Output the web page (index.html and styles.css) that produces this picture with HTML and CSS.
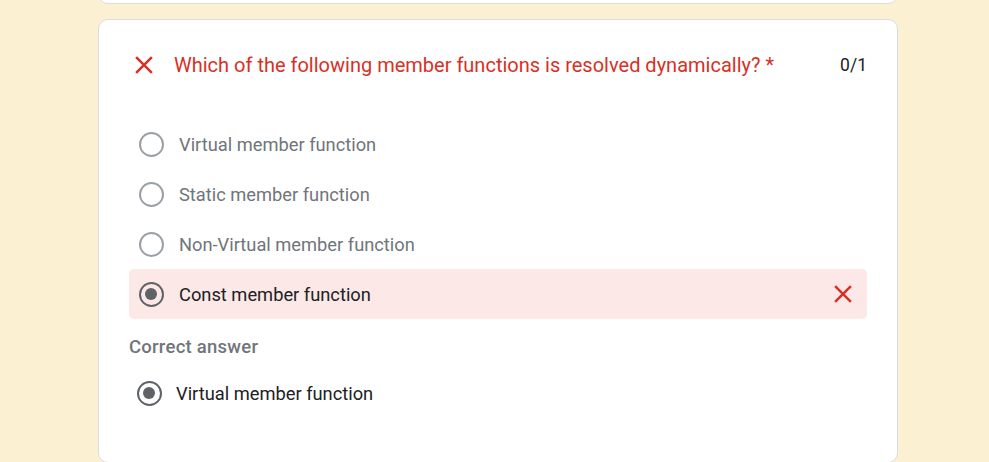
FILE: index.html
```html
<!DOCTYPE html>
<html>
<head>
<meta charset="utf-8">
<link rel="stylesheet" href="styles.css">
</head>
<body>
<div class="page">
  <div class="card card-prev"></div>
  <div class="card card-main">
    <div class="q-head">
      <span class="icon icon-wrong">
        <svg viewBox="0 0 24 24" width="30" height="30"><path d="M19 6.41L17.59 5 12 10.59 6.41 5 5 6.41 10.59 12 5 17.59 6.41 19 12 13.41 17.59 19 19 17.59 13.41 12z" fill="#d93025"/></svg>
      </span>
      <div class="q-title">Which of the following member functions is resolved dynamically? *</div>
      <div class="q-score">0/1</div>
    </div>
    <div class="options">
      <div class="opt">
        <span class="radio"></span>
        <span class="opt-text">Virtual member function</span>
      </div>
      <div class="opt">
        <span class="radio"></span>
        <span class="opt-text">Static member function</span>
      </div>
      <div class="opt">
        <span class="radio"></span>
        <span class="opt-text">Non-Virtual member function</span>
      </div>
      <div class="opt opt-wrong">
        <span class="radio radio-on"></span>
        <span class="opt-text opt-text-sel">Const member function</span>
        <span class="icon icon-row">
          <svg viewBox="0 0 24 24" width="30" height="30"><path d="M19 6.41L17.59 5 12 10.59 6.41 5 5 6.41 10.59 12 5 17.59 6.41 19 12 13.41 17.59 19 19 17.59 13.41 12z" fill="#d93025"/></svg>
        </span>
      </div>
    </div>
    <div class="correct-label">Correct answer</div>
    <div class="opt opt-correct">
      <span class="radio radio-on"></span>
      <span class="opt-text opt-text-sel">Virtual member function</span>
    </div>
  </div>
</div>
</body>
</html>
```
FILE: styles.css
```css
html, body {
  margin: 0;
  padding: 0;
  background: #fbf0d2;
  font-family: Roboto, "Liberation Sans", Arial, sans-serif;
  overflow: hidden;
}
.page {
  width: 800px;
  margin-left: 98px;
  display: flex;
  flex-direction: column;
  gap: 15px;
}
.card {
  background: #fff;
  border: 1px solid #dadce0;
  border-radius: 10px;
  box-sizing: border-box;
}
.card-prev {
  height: 20px;
  margin-top: -16px;
}
.card-main {
  padding: 30px 30px 24px 30px;
  height: 444px;
}
.q-head {
  display: flex;
  align-items: center;
  height: 30px;
}
.icon {
  width: 30px;
  height: 30px;
  flex: none;
  display: block;
}
.icon svg { display: block; }
.q-title {
  margin-left: 15px;
  flex: 1;
  color: #d93025;
  font-size: 20px;
  line-height: 30px;
}
.q-score {
  color: #202124;
  font-size: 17.5px;
  line-height: 30px;
}
.options {
  margin-top: 39px;
  display: flex;
  flex-direction: column;
}
.opt {
  display: flex;
  align-items: center;
  height: 50px;
  padding-left: 9.5px;
  padding-right: 9.5px;
  border-radius: 5px;
}
.opt-wrong {
  background: #fce8e6;
}
.radio {
  width: 25px;
  height: 25px;
  box-sizing: border-box;
  border: 2.5px solid #9aa0a6;
  border-radius: 50%;
  flex: none;
  display: flex;
  align-items: center;
  justify-content: center;
}
.radio-on {
  border-color: #5f6368;
}
.radio-on::after {
  content: "";
  width: 12.5px;
  height: 12.5px;
  border-radius: 50%;
  background: #5f6368;
}
.opt-text {
  margin-left: 15.5px;
  font-size: 18.3px;
  color: #70757a;
  flex: 1;
}
.opt-text-sel {
  color: #202124;
}
.correct-label {
  margin-top: 18px;
  font-size: 18.5px;
  font-weight: 500;
  letter-spacing: 0.25px;
  color: #70757a;
  line-height: 20px;
}
.opt-correct {
  padding-left: 7.5px;
  margin-top: 11px;
}
.opt-correct .opt-text {
  margin-left: 14.5px;
}
```
